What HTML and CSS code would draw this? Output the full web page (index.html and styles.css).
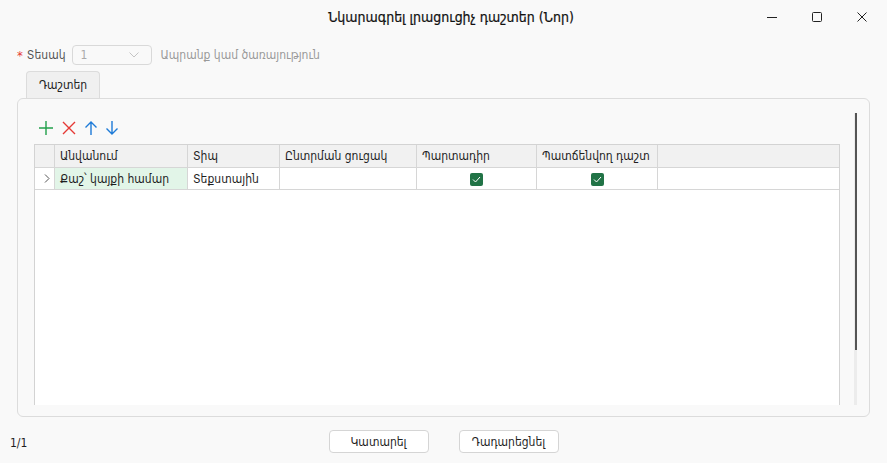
FILE: index.html
```html
<!DOCTYPE html>
<html>

<head>
    <meta charset="utf-8">
    <link rel="stylesheet" href="styles.css">
    <title>Նկարագրել լրացուցիչ դաշտեր (Նոր)</title>
</head>

<body>
    <div class="titlebar">
        <div class="title">Նկարագրել լրացուցիչ դաշտեր (Նոր)</div>
        <div class="controls">
            <svg width="12" height="12" viewBox="0 0 12 12"><path d="M1 6.5h10" stroke="#222" stroke-width="1"/></svg>
            <svg width="12" height="12" viewBox="0 0 12 12"><rect x="1.5" y="1.5" width="9" height="9" rx="1" fill="none" stroke="#222"/></svg>
            <svg width="12" height="12" viewBox="0 0 12 12"><path d="M1.5 1.5l9 9M10.5 1.5l-9 9" stroke="#222"/></svg>
        </div>
    </div>

    <div class="typerow">
        <span class="req">*</span>
        <label class="typelabel">Տեսակ</label>
        <div class="select">
            <span>1</span>
            <svg width="10" height="6" viewBox="0 0 10 6"><path d="M0.5 0.5l4.5 4.5 4.5-4.5" fill="none" stroke="#c4c4c4"/></svg>
        </div>
        <span class="hint">Ապրանք կամ ծառայություն</span>
    </div>

    <div class="tabs">
        <div class="tab">Դաշտեր</div>
    </div>

    <div class="panel">
        <div class="main">
            <div class="toolbar">
                <svg width="16" height="16" viewBox="0 0 16 16"><path d="M8 1v14M1 8h14" stroke="#22a04b" stroke-width="1.4"/></svg>
                <svg width="16" height="16" viewBox="0 0 16 16"><path d="M2 2l12 12M14 2L2 14" stroke="#e53935" stroke-width="1.4"/></svg>
                <svg width="14" height="16" viewBox="0 0 14 16"><path d="M7 15V2M1.5 7.5L7 2l5.5 5.5" fill="none" stroke="#1e7bd8" stroke-width="1.4"/></svg>
                <svg width="14" height="16" viewBox="0 0 14 16"><path d="M7 1v13M1.5 8.5L7 14l5.5-5.5" fill="none" stroke="#1e7bd8" stroke-width="1.4"/></svg>
            </div>
            <div class="grid">
                <table>
                    <tr class="head">
                        <td class="ind"></td>
                        <td class="c1">Անվանում</td>
                        <td class="c2">Տիպ</td>
                        <td class="c3">Ընտրման ցուցակ</td>
                        <td class="c4">Պարտադիր</td>
                        <td class="c5">Պատճենվող դաշտ</td>
                        <td class="c6"></td>
                    </tr>
                    <tr>
                        <td class="ind">
                            <svg width="6" height="9" viewBox="0 0 6 9"><path d="M1 0.5l4 4-4 4" fill="none" stroke="#555"/></svg>
                        </td>
                        <td class="sel">Քաշ՝ կայքի համար</td>
                        <td>Տեքստային</td>
                        <td></td>
                        <td class="mid"><span class="check"><svg width="9" height="7" viewBox="0 0 9 7"><path d="M1 3.5l2.5 2.5L8 1" fill="none" stroke="#fff" stroke-width="1"/></svg></span></td>
                        <td class="mid"><span class="check"><svg width="9" height="7" viewBox="0 0 9 7"><path d="M1 3.5l2.5 2.5L8 1" fill="none" stroke="#fff" stroke-width="1"/></svg></span></td>
                        <td class="c6"></td>
                    </tr>
                </table>
            </div>
        </div>
        <div class="scroll">
            <div class="thumb"></div>
        </div>
    </div>

    <div class="footer">
        <span class="pages">1/1</span>
        <div class="buttons">
            <button>Կատարել</button>
            <button>Դադարեցնել</button>
        </div>
    </div>
</body>

</html>
```

FILE: styles.css
```css
body {
    font-family: "DejaVu Sans Condensed", "DejaVu Sans", sans-serif;
    font-size: 12px;
    color: #1f1f1f;
    background-color: #f9f9f9;
    margin: 0;
    width: 887px;
    height: 463px;
    overflow: hidden;
}

.titlebar {
    height: 34px;
    display: flex;
    align-items: center;
    justify-content: center;
    position: relative;
}

.title {
    font-size: 14px;
    color: #111;
    padding-left: 15px;
    -webkit-text-stroke: 0.2px #111;
}

/* window buttons sit over the right end of the title bar */
.controls {
    position: absolute;
    right: 19px;
    top: 11px;
    display: flex;
    gap: 33px;
}

.typerow {
    display: flex;
    align-items: center;
    height: 22px;
    margin-top: 10px;
    padding-left: 17px;
}

.req {
    color: #e53935;
    font-size: 13px;
    margin-right: 4px;
}

.typelabel {
    color: #555;
}

.select {
    height: 20px;
    margin-left: 6px;
    border: 1px solid #d9d9d9;
    border-radius: 4px;
    display: flex;
    align-items: center;
    justify-content: space-between;
    padding: 0 12px 0 8px;
    box-sizing: border-box;
    color: #aaa;
    width: 80px;
}

.hint {
    color: #9a9a9a;
    margin-left: 9px;
}

.tabs {
    display: flex;
    margin-top: 5px;
    padding-left: 26px;
}

.tab {
    height: 27px;
    width: 74px;
    box-sizing: border-box;
    border: 1px solid #dcdcdc;
    border-bottom: none;
    border-radius: 4px 4px 0 0;
    background-color: #f0f0f0;
    display: flex;
    align-items: center;
    justify-content: center;
    color: #222;
}

.panel {
    margin: 0 17px;
    height: 319px;
    box-sizing: border-box;
    border: 1px solid #dcdcdc;
    border-radius: 6px;
    display: flex;
    padding-bottom: 11px;
}

.main {
    flex: 1;
    display: flex;
    flex-direction: column;
    padding: 21px 0 0 16px;
}

.toolbar {
    display: flex;
    align-items: center;
    gap: 7px;
    height: 16px;
    padding-left: 4px;
}

.grid {
    flex: 1;
    margin-top: 8px;
    background-color: #fff;
    border: 1px solid #d3d3d3;
    border-bottom: none;
}

table {
    border-collapse: collapse;
    width: 100%;
}

td {
    height: 21px;
    padding: 0 0 0 5px;
    border-right: 1px solid #d6d6d6;
    border-bottom: 1px solid #d6d6d6;
    white-space: nowrap;
}

.head td {
    background-color: #f1f1f1;
    height: 22px;
}

td.ind {
    width: 14px;
    text-align: center;
}

td.c1 {
    width: 127px;
}

td.c2 {
    width: 86px;
}

td.c3 {
    width: 131px;
}

td.c4 {
    width: 114px;
}

td.c5 {
    width: 115px;
}

td.c6 {
    border-right: none;
}

td.sel {
    background-color: #e2f5e8;
}

td.mid {
    text-align: center;
    padding: 0;
}

.check {
    display: inline-flex;
    width: 13px;
    height: 13px;
    border-radius: 2px;
    background-color: #217346;
    align-items: center;
    justify-content: center;
    vertical-align: middle;
}

.scroll {
    width: 3px;
    margin: 14px 12px 0 14px;
    background-color: #ececec;
    display: flex;
    flex-direction: column;
}

.thumb {
    height: 237px;
    width: 2px;
    margin-left: 1px;
    background-color: #555;
}

.footer {
    height: 46px;
    display: flex;
    align-items: center;
    position: relative;
}

.pages {
    margin-left: 10px;
    margin-top: 6px;
}

.buttons {
    position: absolute;
    left: 0;
    right: 0;
    top: 13px;
    display: flex;
    justify-content: center;
    gap: 30px;
}

button {
    font-family: inherit;
    font-size: 12px;
    width: 100px;
    height: 23px;
    background-color: #fff;
    border: 1px solid #d5d5d5;
    border-radius: 4px;
    color: #1f1f1f;
}
```
